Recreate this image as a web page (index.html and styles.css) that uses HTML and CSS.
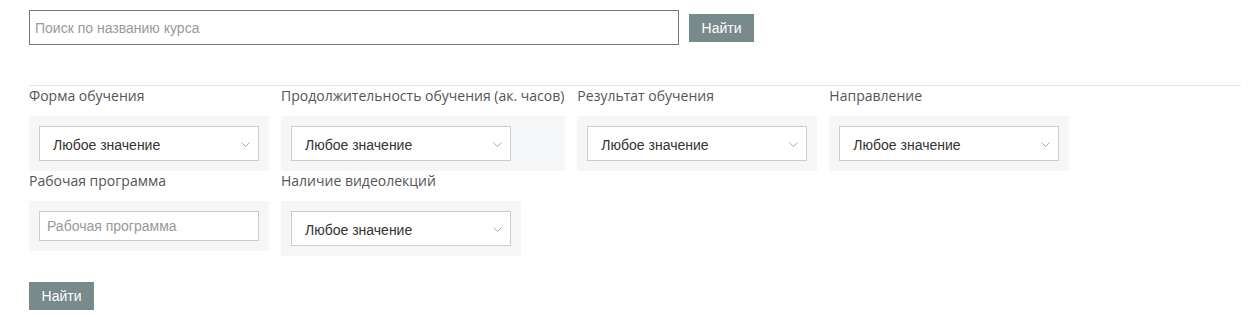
FILE: index.html
```html
<!DOCTYPE html>
<html lang="ru">

<head>
	<title>Поиск курсов</title>
	<meta charset="utf-8">
	<link rel="stylesheet" href="styles.css">
</head>

<body>
	<div class="page">
		<form class="search">
			<input class="search-input" type="text" placeholder="Поиск по названию курса">
			<button class="btn" type="button">Найти</button>
		</form>

		<form class="filters">
			<div class="items">
				<div class="item">
					<div class="lbl">Форма обучения</div>
					<div class="box">
						<div class="sel"><select><option>Любое значение</option></select><svg class="chev" width="9" height="5" viewBox="0 0 9 5"><path d="M0.5 0.5 L4.5 4.5 L8.5 0.5" fill="none" stroke="#aaa" stroke-width="1"/></svg></div>
					</div>
				</div>
				<div class="item">
					<div class="lbl">Продолжительность обучения (ак. часов)</div>
					<div class="box">
						<div class="sel"><select><option>Любое значение</option></select><svg class="chev" width="9" height="5" viewBox="0 0 9 5"><path d="M0.5 0.5 L4.5 4.5 L8.5 0.5" fill="none" stroke="#aaa" stroke-width="1"/></svg></div>
					</div>
				</div>
				<div class="item">
					<div class="lbl">Результат обучения</div>
					<div class="box">
						<div class="sel"><select><option>Любое значение</option></select><svg class="chev" width="9" height="5" viewBox="0 0 9 5"><path d="M0.5 0.5 L4.5 4.5 L8.5 0.5" fill="none" stroke="#aaa" stroke-width="1"/></svg></div>
					</div>
				</div>
				<div class="item">
					<div class="lbl">Направление</div>
					<div class="box">
						<div class="sel"><select><option>Любое значение</option></select><svg class="chev" width="9" height="5" viewBox="0 0 9 5"><path d="M0.5 0.5 L4.5 4.5 L8.5 0.5" fill="none" stroke="#aaa" stroke-width="1"/></svg></div>
					</div>
				</div>
				<div class="break"></div>
				<div class="item">
					<div class="lbl">Рабочая программа</div>
					<div class="box">
						<input class="text" type="text" placeholder="Рабочая программа">
					</div>
				</div>
				<div class="item">
					<div class="lbl">Наличие видеолекций</div>
					<div class="box">
						<div class="sel"><select><option>Любое значение</option></select><svg class="chev" width="9" height="5" viewBox="0 0 9 5"><path d="M0.5 0.5 L4.5 4.5 L8.5 0.5" fill="none" stroke="#aaa" stroke-width="1"/></svg></div>
					</div>
				</div>
			</div>
			<button class="btn submit" type="button">Найти</button>
		</form>
	</div>
</body>

</html>
```

FILE: styles.css
```css
html {
	font-size: 14px;
}

body {
	margin: 0;
	background-color: white;
	color: #333;
	font-family: "Liberation Sans", Arial, sans-serif;
}

.page {
	padding: 10px 9px 0 29px;
}

/* top search */
.search {
	display: flex;
	align-items: center;
	gap: 10px;
}

.search-input {
	box-sizing: border-box;
	width: 650px;
	height: 35px;
	margin: 0;
	padding: 0 5px;
	border: 1px solid #777;
	font-family: "Liberation Sans", Arial, sans-serif;
	font-size: 14px;
	color: #333;
	outline: none;
}

.search-input::placeholder,
.text::placeholder {
	color: #999;
}

.btn {
	width: 65px;
	height: 28px;
	padding: 0;
	border: none;
	background-color: #788a8b;
	color: white;
	font-family: "Liberation Sans", Arial, sans-serif;
	font-size: 14px;
}

/* filters */
.filters {
	margin-top: 40px;
	border-top: 1px solid #e6e6e6;
}

.items {
	display: flex;
	flex-wrap: wrap;
	align-items: flex-start;
	column-gap: 12px;
}

.break {
	flex-basis: 100%;
	height: 0;
}

.item {
	display: flex;
	flex-direction: column;
	min-width: 240px;
}

.lbl {
	font-family: "Open Sans", sans-serif;
	font-size: 14px;
	line-height: 20px;
	color: #555;
	margin-top: 0;
	margin-bottom: 10px;
	padding-right: 1px;
	white-space: nowrap;
}

.box {
	background-color: #f5f6f8;
	padding: 10px;
}

.sel {
	position: relative;
	width: 220px;
}

.sel select {
	box-sizing: border-box;
	width: 220px;
	height: 35px;
	margin: 0;
	padding: 3px 24px 0 13px;
	border: 1px solid #ccc;
	border-radius: 0;
	background-color: white;
	-webkit-appearance: none;
	appearance: none;
	font-family: "Liberation Sans", Arial, sans-serif;
	font-size: 14px;
	color: #333;
	outline: none;
}

.chev {
	position: absolute;
	right: 9px;
	top: 16px;
	pointer-events: none;
}

.text {
	box-sizing: border-box;
	width: 220px;
	height: 30px;
	margin: 0;
	padding: 0 7px;
	border: 1px solid #ccc;
	font-family: "Liberation Sans", Arial, sans-serif;
	font-size: 14px;
	color: #333;
	outline: none;
}

.submit {
	margin-top: 26px;
}
```
